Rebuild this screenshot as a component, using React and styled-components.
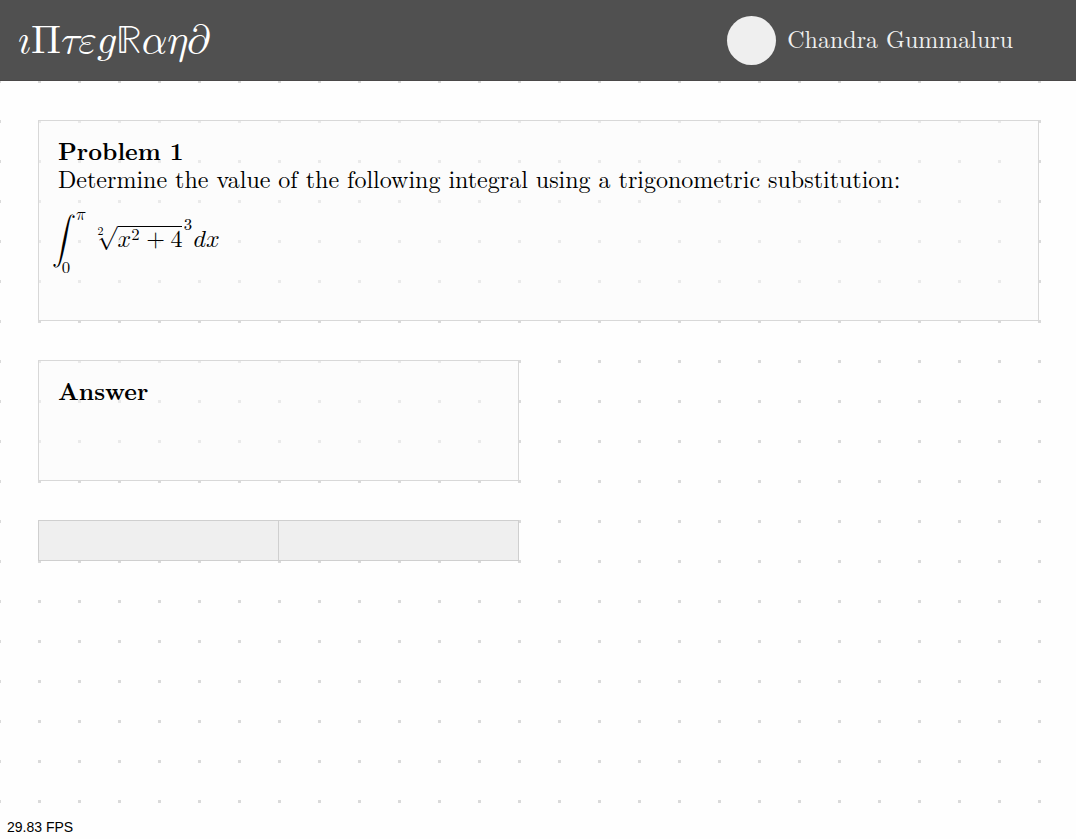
import React from "react";
import styled, { createGlobalStyle } from "styled-components";

const serif = `"Latin Modern Roman", "CMU Serif", "Liberation Serif", serif`;
const mathFont = `"Latin Modern Math", "Latin Modern Roman", "CMU Serif", "Liberation Serif", serif`;

const GlobalStyle = createGlobalStyle`
  *, *::before, *::after { box-sizing: border-box; }
  body { margin: 0; background: #fff; color: #000; font-family: ${serif}; }
`;

const Page = styled.div`
  min-height: 100vh;
  display: flex;
  flex-direction: column;
  background-color: #fefefe;
  background-image: conic-gradient(from 270deg at 3px 3px, #dadada 90deg, transparent 0);
  background-size: 40px 40px;
  background-position: 38px 0;
`;

const Header = styled.header`
  display: flex;
  align-items: center;
  justify-content: space-between;
  min-height: 81px;
  padding: 0 63px 0 18px;
  background: #505050;
  border-bottom: 1px solid #4a4848;
  color: #fff;
`;

const Logo = styled.a`
  padding-top: 2px;
  color: inherit;
  text-decoration: none;
  font-family: ${mathFont};
  font-size: 40px;
  line-height: 48px;
`;

const Profile = styled.div`
  display: flex;
  align-items: center;
  gap: 11px;
  color: #efefef;
`;

const Avatar = styled.span`
  width: 49px;
  height: 49px;
  border-radius: 50%;
  background: #efefef;
`;

const UserName = styled.span`
  padding-bottom: 4px;
  font-size: 24px;
  line-height: 28px;
`;

const Main = styled.main`
  flex: 1;
  display: flex;
  flex-direction: column;
  gap: 39px;
  padding: 39px 37px 39px 38px;
`;

const Card = styled.section`
  width: ${(p) => (p.$half ? "481px" : "auto")};
  max-width: 100%;
  min-height: ${(p) => (p.$half ? "121px" : "201px")};
  padding: 15px 19px;
  border: 1px solid #d8d8d8;
  background: rgba(249, 249, 249, 0.5);
`;

const Title = styled.h2`
  margin: 0;
  font-size: 24px;
  line-height: 28px;
  font-weight: 700;
`;

const Text = styled.p`
  margin: 0;
  font-size: 24px;
  line-height: 28px;
`;

const Formula = styled.div`
  margin: 20px 0 0 -6px;

  math {
    font-family: ${mathFont};
    font-size: 24px;
    math-style: normal;
  }

  mroot {
    margin-right: -4px;
  }
`;

const Actions = styled.div`
  display: flex;
  width: 481px;
  max-width: 100%;
`;

const ActionButton = styled.button`
  flex: 1;
  height: 41px;
  margin: 0;
  border: 1px solid #cfcfcf;
  border-radius: 0;
  background: #efefef;

  & + & { border-left: 0; }
`;

const Footer = styled.footer`
  padding: 0 7px 4px;
  font-family: "Liberation Sans", Arial, sans-serif;
  font-size: 14px;
  line-height: 16px;
`;

export default function App() {
  return (
    <Page>
      <GlobalStyle />
      <Header>
        <Logo href="#">𝚤Π𝜏𝜀𝑔ℝ𝛼𝜂𝜕</Logo>
        <Profile>
          <Avatar />
          <UserName>Chandra Gummaluru</UserName>
        </Profile>
      </Header>
      <Main>
        <Card>
          <Title>Problem 1</Title>
          <Text>Determine the value of the following integral using a trigonometric substitution:</Text>
          <Formula>
            <math>
              <msubsup>
                <mo lspace="0">∫</mo>
                <mn>0</mn>
                <mi>π</mi>
              </msubsup>
              <msup>
                <mroot>
                  <mrow>
                    <msup><mi>x</mi><mn>2</mn></msup>
                    <mo>+</mo>
                    <mn>4</mn>
                  </mrow>
                  <mn>2</mn>
                </mroot>
                <mn>3</mn>
              </msup>
              <mi>d</mi>
              <mi>x</mi>
            </math>
          </Formula>
        </Card>
        <Card $half>
          <Title>Answer</Title>
        </Card>
        <Actions>
          <ActionButton type="button" aria-label="Previous" />
          <ActionButton type="button" aria-label="Next" />
        </Actions>
      </Main>
      <Footer>29.83 FPS</Footer>
    </Page>
  );
}
